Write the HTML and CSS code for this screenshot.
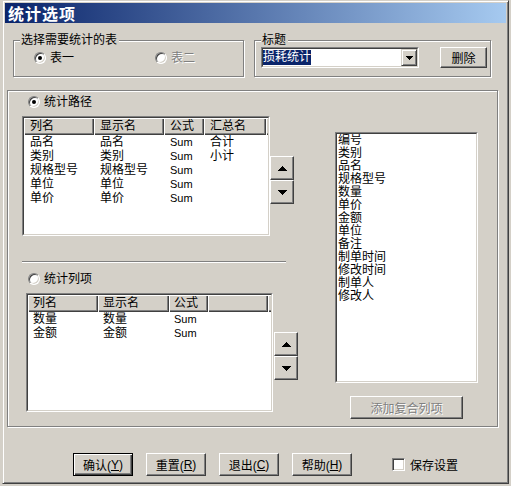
FILE: index.html
```html
<!DOCTYPE html>
<html lang="zh-CN">
<head>
<meta charset="utf-8">
<title>统计选项</title>
<link rel="stylesheet" href="styles.css">
</head>
<body>
<div class="dialog">
  <div class="titlebar">统计选项</div>
  <div class="top-row">
    <div class="group g1">
      <span class="cap">选择需要统计的表</span>
      <div class="radios">
        <label class="radio r1"><span class="rb checked"></span>表一</label>
        <label class="radio"><span class="rb"></span><span class="dis">表二</span></label>
      </div>
    </div>
    <div class="group g2">
      <span class="cap">标题</span>
      <div class="g2-body">
        <div class="sunken combo">
          <div class="sunken-in combo-in">
            <span class="sel">损耗统计</span>
            <span class="combo-btn"><svg width="7" height="4" viewBox="0 0 7 4"><path d="M0 0h7v1h-1v1h-1v1h-1v1h-1v-1h-1v-1h-1v-1h-1z"/></svg></span>
          </div>
        </div>
        <button class="btn del">删除</button>
      </div>
    </div>
  </div>

  <div class="frame">
    <div class="left-col">
      <label class="radio rr1"><span class="rb checked"></span>统计路径</label>
      <div class="list-row lr1">
        <div class="sunken lv lv1">
          <div class="sunken-in">
            <div class="lv-head">
              <div class="hc c1">列名</div>
              <div class="hc c2">显示名</div>
              <div class="hc c3">公式</div>
              <div class="hc c4">汇总名</div>
              <div class="hc fill"></div>
            </div>
            <div class="lv-row"><span class="c1">品名</span><span class="c2">品名</span><span class="c3 en">Sum</span><span class="c4">合计</span></div>
            <div class="lv-row"><span class="c1">类别</span><span class="c2">类别</span><span class="c3 en">Sum</span><span class="c4">小计</span></div>
            <div class="lv-row"><span class="c1">规格型号</span><span class="c2">规格型号</span><span class="c3 en">Sum</span><span class="c4"></span></div>
            <div class="lv-row"><span class="c1">单位</span><span class="c2">单位</span><span class="c3 en">Sum</span><span class="c4"></span></div>
            <div class="lv-row"><span class="c1">单价</span><span class="c2">单价</span><span class="c3 en">Sum</span><span class="c4"></span></div>
          </div>
        </div>
        <div class="spin">
          <button class="btn arrow"><svg width="9" height="5" viewBox="0 0 9 5"><path d="M4 0h1v1h1v1h1v1h1v1h1v1H0v-1h1v-1h1v-1h1v-1h1z"/></svg></button>
          <button class="btn arrow"><svg width="9" height="5" viewBox="0 0 9 5"><path d="M0 0h9v1h-1v1h-1v1h-1v1h-1v1h-1v-1h-1v-1h-1v-1h-1v-1h-1z"/></svg></button>
        </div>
      </div>
      <div class="sep"></div>
      <label class="radio rr2"><span class="rb"></span>统计列项</label>
      <div class="list-row lr2">
        <div class="sunken lv lv2">
          <div class="sunken-in">
            <div class="lv-head">
              <div class="hc c1">列名</div>
              <div class="hc c2">显示名</div>
              <div class="hc c3">公式</div>
              <div class="hc c4"></div>
              <div class="hc fill"></div>
            </div>
            <div class="lv-row"><span class="c1">数量</span><span class="c2">数量</span><span class="c3 en">Sum</span></div>
            <div class="lv-row"><span class="c1">金额</span><span class="c2">金额</span><span class="c3 en">Sum</span></div>
          </div>
        </div>
        <div class="spin">
          <button class="btn arrow"><svg width="9" height="5" viewBox="0 0 9 5"><path d="M4 0h1v1h1v1h1v1h1v1h1v1H0v-1h1v-1h1v-1h1v-1h1z"/></svg></button>
          <button class="btn arrow"><svg width="9" height="5" viewBox="0 0 9 5"><path d="M0 0h9v1h-1v1h-1v1h-1v1h-1v1h-1v-1h-1v-1h-1v-1h-1v-1h-1z"/></svg></button>
        </div>
      </div>
    </div>
    <div class="right-col">
      <div class="sunken listbox">
        <div class="sunken-in lb-in">
          <div class="lb-item">编号</div>
          <div class="lb-item">类别</div>
          <div class="lb-item">品名</div>
          <div class="lb-item">规格型号</div>
          <div class="lb-item">数量</div>
          <div class="lb-item">单价</div>
          <div class="lb-item">金额</div>
          <div class="lb-item">单位</div>
          <div class="lb-item">备注</div>
          <div class="lb-item">制单时间</div>
          <div class="lb-item">修改时间</div>
          <div class="lb-item">制单人</div>
          <div class="lb-item">修改人</div>
        </div>
      </div>
      <button class="btn add-btn"><span class="dis">添加复合列项</span></button>
    </div>
  </div>

  <div class="bottom">
    <button class="btn bb default">确认(<u>Y</u>)</button>
    <button class="btn bb">重置(<u>R</u>)</button>
    <button class="btn bb">退出(<u>C</u>)</button>
    <button class="btn bb">帮助(<u>H</u>)</button>
    <label class="check"><span class="chk"></span>保存设置</label>
  </div>
</div>
</body>
</html>
```

FILE: styles.css
```css
* { box-sizing: border-box; }
html, body { margin: 0; padding: 0; }
body {
  width: 511px;
  height: 486px;
  overflow: hidden;
  background: #d4d0c8;
  font-family: "Liberation Sans", "Noto Sans CJK SC", sans-serif;
  font-size: 12px;
  color: #000;
}
.dialog {
  margin-left: 2px;
  width: 507px;
  height: 484px;
  border: 1px solid;
  border-color: #d4d0c8 #404040 #404040 #d4d0c8;
  box-shadow: inset 1px 1px #fff, inset -1px -1px #808080;
  padding: 2px;
  background: #d4d0c8;
}
.titlebar {
  height: 20px;
  line-height: 20px;
  padding-left: 3px;
  color: #fff;
  font-family: "Noto Sans CJK SC", sans-serif;
  font-weight: bold;
  font-size: 16px;
  letter-spacing: 1px;
  background: linear-gradient(to right, #0a246a, #a6caf0);
}

/* group boxes */
.top-row { display: flex; margin: 10px 0 0 8px; }
.group {
  position: relative;
  margin-top: 7px;
  height: 37px;
  border: 1px solid #808080;
  box-shadow: inset 1px 1px #fff, 1px 1px #fff;
}
.g1 { width: 231px; }
.g2 { width: 237px; margin-left: 10px; }
.cap {
  position: absolute;
  top: -8px;
  left: 6px;
  padding: 0 2px 0 1px;
  line-height: 14px;
  background: #d4d0c8;
  white-space: nowrap;
}
.radios { display: flex; padding: 10px 0 0 20px; }
.radio { display: flex; align-items: center; height: 14px; line-height: 14px; white-space: nowrap; }
.r1 { width: 121px; }
.rb {
  flex: none;
  width: 12px;
  height: 12px;
  margin-right: 4px;
  border-radius: 50%;
  border: 1px solid;
  border-color: #808080 #fff #fff #808080;
  box-shadow: inset 1px 1px #404040, inset -1px -1px #d4d0c8;
  background: #fff;
  display: flex;
  align-items: center;
  justify-content: center;
}
.rb.checked::after {
  content: "";
  width: 4px;
  height: 4px;
  border-radius: 50%;
  background: #000;
}
.dis { color: #808080; text-shadow: 1px 1px #fff; }

.g2-body { display: flex; padding: 6px 0 0 6px; }

/* sunken fields */
.sunken {
  border: 1px solid;
  border-color: #808080 #fff #fff #808080;
  flex: none;
}
.sunken-in {
  height: 100%;
  border: 1px solid;
  border-color: #404040 #d4d0c8 #d4d0c8 #404040;
  background: #fff;
  overflow: hidden;
}
.combo { width: 158px; height: 21px; }
.combo-in { display: flex; }
.sel {
  margin-top: 1px;
  height: 15px;
  line-height: 15px;
  background: #0a246a;
  color: #fff;
  white-space: nowrap;
}
.combo-btn {
  margin-left: auto;
  width: 16px;
  height: 17px;
  background: #d4d0c8;
  border: 1px solid;
  border-color: #d4d0c8 #404040 #404040 #d4d0c8;
  box-shadow: inset 1px 1px #fff, inset -1px -1px #808080;
  display: flex;
  align-items: center;
  justify-content: center;
}
svg { display: block; fill: #000; }

/* buttons */
.btn {
  appearance: none;
  margin: 0;
  padding: 0;
  font: inherit;
  color: #000;
  background: #d4d0c8;
  border: 1px solid;
  border-color: #fff #404040 #404040 #fff;
  box-shadow: inset -1px -1px #808080, inset 1px 1px #d4d0c8;
  display: flex;
  align-items: center;
  justify-content: center;
  white-space: nowrap;
  flex: none;
}
.btn.default {
  border-color: #000;
  box-shadow: inset 1px 1px #fff, inset -1px -1px #404040, inset -2px -2px #808080;
}
.btn u { text-decoration: underline; text-underline-offset: 1px; }
.del { width: 47px; height: 21px; margin-left: 21px; }

/* main frame */
.frame {
  display: flex;
  margin: 13px 0 0 2px;
  width: 491px;
  height: 337px;
  border: 1px solid #808080;
  box-shadow: inset 1px 1px #fff, 1px 1px #fff;
}
.left-col { width: 290px; flex: none; }
.rr1 { margin: 4px 0 0 20px; }
.list-row { display: flex; align-items: flex-start; }
.lr1 { margin: 7px 0 0 14px; }
.lv1 { width: 248px; height: 120px; }
.lr1 .spin { margin-top: 40px; }
.spin { display: flex; flex-direction: column; }
.arrow { width: 24px; height: 24px; }
.sep {
  width: 264px;
  height: 2px;
  margin: 25px 0 0 14px;
  border-top: 1px solid #808080;
  border-bottom: 1px solid #fff;
}
.rr2 { margin: 9px 0 0 20px; }
.lr2 { margin: 7px 0 0 18px; }
.lv2 { width: 247px; height: 119px; }
.lr2 .spin { margin: 39px 0 0 1px; }

.lv-head { display: flex; height: 17px; }
.hc {
  flex: none;
  height: 17px;
  line-height: 17px;
  padding-left: 6px;
  background: #d4d0c8;
  box-shadow: inset 1px 1px #fff, inset -1px -1px #404040, inset -2px -2px #808080;
  white-space: nowrap;
  overflow: hidden;
}
.hc.fill { flex: 1; }
.lv-row { display: flex; height: 14px; line-height: 14px; white-space: nowrap; }
.lv-row span { flex: none; padding-left: 6px; overflow: hidden; }
.lv2 .hc, .lv2 .lv-row span { padding-left: 5px; }
.lv1 .c1, .lv1 .c2 { width: 70px; }
.lv1 .c3 { width: 40px; }
.lv1 .c4 { width: 62px; }
.lv2 .c1 { width: 70px; }
.lv2 .c2 { width: 71px; }
.lv2 .c3 { width: 39px; }
.lv2 .c4 { width: 60px; }
.en { font-size: 11px; }

.right-col { margin-left: 37px; }
.listbox { margin-top: 41px; width: 143px; height: 251px; }
.lb-in { padding-left: 1px; }
.lb-item { height: 13px; line-height: 13px; white-space: nowrap; }
.add-btn { margin: 13px 0 0 15px; width: 113px; height: 23px; }

/* bottom row */
.bottom {
  display: flex;
  align-items: center;
  gap: 13px;
  margin-top: 26px;
  padding-left: 68px;
}
.bb { width: 60px; height: 23px; }
.check { display: flex; align-items: center; margin-left: 27px; white-space: nowrap; }
.chk {
  flex: none;
  width: 13px;
  height: 13px;
  margin-right: 5px;
  border: 1px solid;
  border-color: #808080 #fff #fff #808080;
  box-shadow: inset 1px 1px #404040, inset -1px -1px #d4d0c8;
  background: #fff;
}
```
